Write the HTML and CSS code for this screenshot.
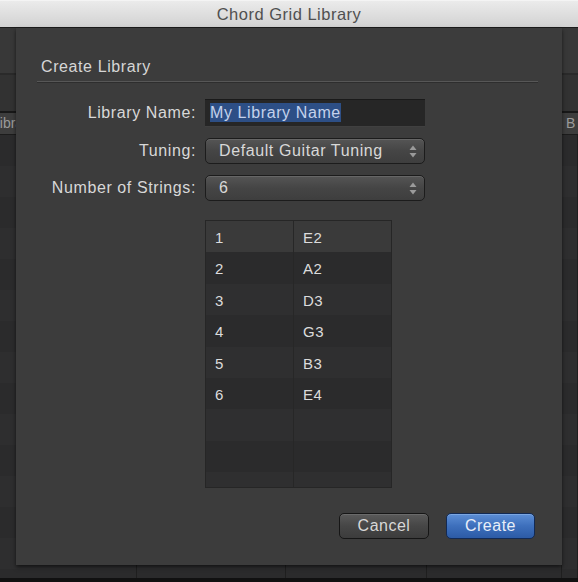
FILE: index.html
```html
<!DOCTYPE html>
<html>
<head>
  <title>Chord Grid Library</title>
  <link rel="stylesheet" href="styles.css">
</head>
<body>

  <div class="window">
    <div class="titlebar">Chord Grid Library</div>

    <div class="app">
      <div class="band band-top"></div>
      <div class="band band-mid"></div>
      <div class="list-head">
        <span class="head-left">Library</span>
        <span class="head-right">B</span>
      </div>
      <div class="list">
        <div class="col"></div>
        <div class="col"></div>
        <div class="col"></div>
        <div class="col"></div>
        <div class="col"></div>
      </div>
      <div class="footer-line"></div>
    </div>

    <div class="sheet">
      <h3 class="sheet-title">Create Library</h3>

      <div class="form">
        <label>Library Name:</label>
        <div class="textfield"><span class="selected">My Library Name</span></div>

        <label>Tuning:</label>
        <div class="popup">
          <span>Default Guitar Tuning</span>
          <svg class="arrows" width="8" height="13" viewBox="0 0 8 13">
            <path d="M4 0.5 L7.5 5 L0.5 5 Z" fill="#9a9a9a"/>
            <path d="M4 12.5 L7.5 8 L0.5 8 Z" fill="#9a9a9a"/>
          </svg>
        </div>

        <label>Number of Strings:</label>
        <div class="popup">
          <span>6</span>
          <svg class="arrows" width="8" height="13" viewBox="0 0 8 13">
            <path d="M4 0.5 L7.5 5 L0.5 5 Z" fill="#9a9a9a"/>
            <path d="M4 12.5 L7.5 8 L0.5 8 Z" fill="#9a9a9a"/>
          </svg>
        </div>
      </div>

      <div class="strings">
        <div class="row first"><span>1</span><span>E2</span></div>
        <div class="row"><span>2</span><span>A2</span></div>
        <div class="row"><span>3</span><span>D3</span></div>
        <div class="row"><span>4</span><span>G3</span></div>
        <div class="row"><span>5</span><span>B3</span></div>
        <div class="row"><span>6</span><span>E4</span></div>
        <div class="row"><span></span><span></span></div>
        <div class="row"><span></span><span></span></div>
        <div class="row"><span></span><span></span></div>
      </div>

      <div class="buttons">
        <button class="btn">Cancel</button>
        <button class="btn primary">Create</button>
      </div>
    </div>
  </div>

</body>
</html>
```

FILE: styles.css
```css
body {
  margin: 0;
  background: #1a1a1a;
  font-family: "Liberation Sans", Arial, sans-serif;
  overflow: hidden;
}

.window {
  position: relative;
  width: 578px;
  height: 582px;
  overflow: hidden;
  background: #2c2c2d;
}

.titlebar {
  height: 28px;
  box-sizing: border-box;
  border-top: 1px solid #f4f4f4;
  border-bottom: 1px solid #1c1c1c;
  background: linear-gradient(#ebebeb, #d2d2d2);
  color: #505050;
  font-size: 16.5px;
  letter-spacing: 0.5px;
  text-align: center;
  line-height: 27px;
}

.app {
  display: flex;
  flex-direction: column;
  height: 554px;
}

.band-top {
  height: 45px;
  background: #383838;
  border-bottom: 2px solid #2a2a2a;
}

.band-mid {
  height: 36px;
  background: #323232;
  border-bottom: 2px solid #181818;
}

.list-head {
  height: 21px;
  background: #3d3d3d;
  border-bottom: 1px solid #1c1c1c;
  color: #9a9a9a;
  font-size: 14px;
  line-height: 21px;
  position: relative;
}

.head-left {
  position: absolute;
  left: -8px;
}

.head-right {
  position: absolute;
  left: 566px;
}

.list {
  flex: 1;
  display: grid;
  grid-template-columns: 137px 149px 141px 135px 16px;
  background: repeating-linear-gradient(#2b2b2c 0 31px, #2e2e2f 31px 62px);
}

.col {
  border-right: 1px solid #1f1f1f;
}

.footer-line {
  height: 4px;
  background: #111;
}

.sheet {
  position: absolute;
  left: 16px;
  top: 28px;
  width: 546px;
  height: 537px;
  box-sizing: border-box;
  padding: 29px 24px 0 21px;
  background: #3c3c3c;
  box-shadow: 0 2px 4px rgba(0,0,0,0.6);
  color: #d8d8d8;
  font-size: 16px;
  letter-spacing: 0.6px;
}

.sheet-title {
  margin: 0;
  padding: 0 0 4px 4px;
  font-size: 16px;
  font-weight: normal;
  line-height: 20px;
  color: #d6d6d6;
  border-bottom: 1px solid #575757;
  box-shadow: 0 1px 0 #2e2e2e;
}

.form {
  display: grid;
  grid-template-columns: 159px 220px;
  column-gap: 9px;
  row-gap: 11px;
  margin-top: 17px;
  align-items: center;
}

.form label {
  text-align: right;
}

.textfield {
  height: 28px;
  box-sizing: border-box;
  background: #262626;
  border-top: 1px solid #1a1a1a;
  border-bottom: 1px solid #404040;
  padding: 2px 5px;
  line-height: 22px;
}

.selected {
  background: #2d4f86;
  color: #c4d2ec;
  padding: 1px 0;
}

.popup {
  position: relative;
  height: 26px;
  box-sizing: border-box;
  border: 1px solid #1c1c1c;
  border-radius: 5px;
  background: linear-gradient(#555555, #454545 50%, #3e3e3e);
  box-shadow: inset 0 1px 0 #666;
  padding-left: 13px;
  line-height: 24px;
}

.arrows {
  position: absolute;
  right: 7px;
  top: 6px;
}

.strings {
  margin: 19px 0 0 168px;
  width: 187px;
  height: 268px;
  box-sizing: border-box;
  border: 1px solid #262626;
  overflow: hidden;
  background: #2b2b2c;
  font-size: 15px;
  letter-spacing: 0.5px;
  color: #dcdcdc;
}

.row {
  display: grid;
  grid-template-columns: 88px 1fr;
  height: 31.4px;
  background: #2b2b2c;
}

.row:nth-child(odd) {
  background: #2f2f30;
}

.row.first {
  background: #3a3a3a;
}

.row span {
  padding-left: 9px;
  line-height: 34px;
}

.row span:first-child {
  border-right: 1px solid #272727;
}

.buttons {
  display: flex;
  justify-content: flex-end;
  gap: 17px;
  margin-top: 25px;
  padding-right: 3px;
}

.btn {
  width: 90px;
  height: 26px;
  border: 1px solid #161616;
  border-radius: 5px;
  background: linear-gradient(#5a5a5a, #464646 50%, #3c3c3c);
  box-shadow: inset 0 1px 0 #6a6a6a;
  color: #d8d8d8;
  font-family: "Liberation Sans", Arial, sans-serif;
  font-size: 16px;
  letter-spacing: 0.5px;
  padding: 0;
}

.btn.primary {
  width: 89px;
  border-color: #122a55;
  background: linear-gradient(#5d8fd6, #3d6fbc 50%, #2c5ba6);
  box-shadow: inset 0 1px 0 #7aa6e2;
  color: #e8eef8;
}
```
